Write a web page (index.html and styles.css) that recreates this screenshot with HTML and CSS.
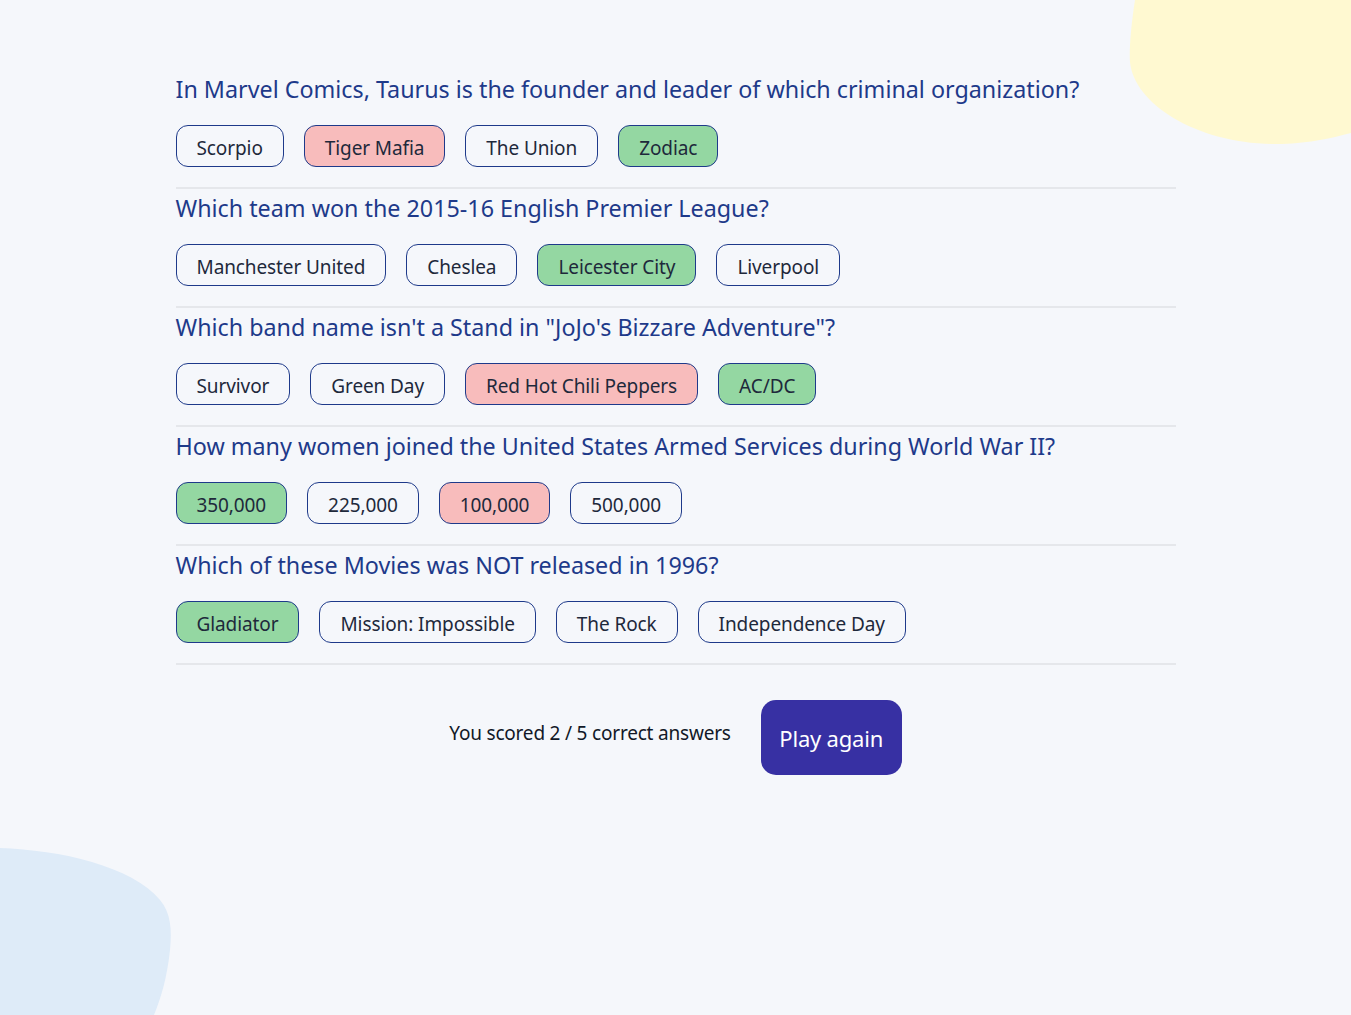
FILE: index.html
```html
<!DOCTYPE html>
<html lang="en">
<head>
<meta charset="utf-8">
<title>Quizzical</title>
<link rel="stylesheet" href="styles.css">
</head>
<body>
<svg class="blob blob-yellow" width="230" height="150" viewBox="1121 0 230 150" aria-hidden="true"><path d="M1135,0 C1131,25 1129,50 1130,62 C1134,105 1200,146 1282,144 C1310,143 1332,138 1351,133 L1351,0 Z" fill="#fff9d1"/></svg>
<svg class="blob blob-blue" width="180" height="175" viewBox="0 840 180 175" aria-hidden="true"><path d="M0,848 C60,850 132,866 160,900 C171,913 172,930 170,950 C167,978 161,998 154,1015 L0,1015 Z" fill="#deebf8"/></svg>
<main class="quiz">
  <section class="q">
    <h2 class="q-title">In Marvel Comics, Taurus is the founder and leader of which criminal organization?</h2>
    <div class="answers">
      <span class="ans">Scorpio</span>
      <span class="ans wrong">Tiger Mafia</span>
      <span class="ans">The Union</span>
      <span class="ans right">Zodiac</span>
    </div>
  </section>
  <section class="q">
    <h2 class="q-title">Which team won the 2015-16 English Premier League?</h2>
    <div class="answers">
      <span class="ans">Manchester United</span>
      <span class="ans">Cheslea</span>
      <span class="ans right">Leicester City</span>
      <span class="ans">Liverpool</span>
    </div>
  </section>
  <section class="q">
    <h2 class="q-title">Which band name isn't a Stand in "JoJo's Bizzare Adventure"?</h2>
    <div class="answers">
      <span class="ans">Survivor</span>
      <span class="ans">Green Day</span>
      <span class="ans wrong">Red Hot Chili Peppers</span>
      <span class="ans right">AC/DC</span>
    </div>
  </section>
  <section class="q">
    <h2 class="q-title">How many women joined the United States Armed Services during World War II?</h2>
    <div class="answers">
      <span class="ans right">350,000</span>
      <span class="ans">225,000</span>
      <span class="ans wrong">100,000</span>
      <span class="ans">500,000</span>
    </div>
  </section>
  <section class="q">
    <h2 class="q-title">Which of these Movies was NOT released in 1996?</h2>
    <div class="answers">
      <span class="ans right">Gladiator</span>
      <span class="ans">Mission: Impossible</span>
      <span class="ans">The Rock</span>
      <span class="ans">Independence Day</span>
    </div>
  </section>
  <div class="result">
    <p class="score">You scored 2 / 5 correct answers</p>
    <button class="play">Play again</button>
  </div>
</main>
</body>
</html>
```

FILE: styles.css
```css
* { box-sizing: border-box; }
html, body { margin: 0; padding: 0; }
body {
  background: #f5f7fb;
  font-family: "Noto Sans", "Open Sans", sans-serif;
  color: #1e293b;
  min-height: 1015px;
  position: relative;
  overflow: hidden;
}
.blob { position: absolute; display: block; }
.blob-yellow { top: 0; right: 0; }
.blob-blue { left: 0; bottom: 0; }
.quiz {
  position: relative;
  width: 1000px;
  margin: 0 auto;
  padding-top: 70px;
}
.q {
  padding: 4px 0 20px;
  border-bottom: 2px solid #e5e7eb;
}
.q-title {
  margin: 0 0 21px;
  font-size: 23.3px;
  line-height: 30px;
  font-weight: 400;
  color: #1e3a8a;
}
.answers { display: flex; gap: 20px; }
.ans {
  display: inline-block;
  height: 42px;
  line-height: 38px;
  padding: 3px 20px 0;
  border: 1px solid #1e3a8a;
  border-radius: 12px;
  font-size: 19px;
  color: #1e293b;
  letter-spacing: -0.1px;
}
.ans.wrong { background: #f8bcbc; }
.ans.right { background: #94d7a2; }
.result {
  display: flex;
  justify-content: center;
  align-items: center;
  gap: 30px;
  margin-top: 35px;
}
.score {
  margin: 0 0 10px;
  font-size: 19px;
  color: #111827;
  letter-spacing: -0.2px;
}
.play {
  width: 141px;
  height: 75px;
  border: none;
  border-radius: 15px;
  background: #3730a3;
  color: #fff;
  font-family: inherit;
  font-size: 22px;
  letter-spacing: -0.2px;
  padding: 0;
}
```
